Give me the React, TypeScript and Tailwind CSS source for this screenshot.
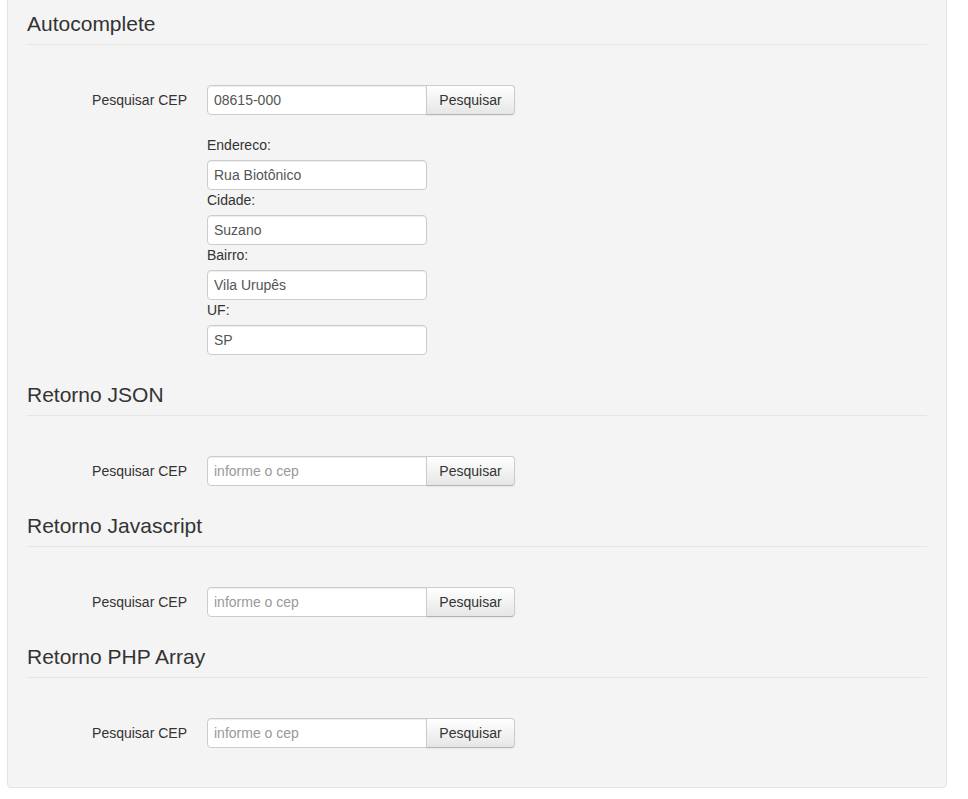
import type { ReactNode } from 'react'

const font = { fontFamily: '"Liberation Sans", Arial, sans-serif' }

function Legend({ children }: { children: ReactNode }) {
  return (
    <div className="mb-5 h-[41px] border-b border-[#e5e5e5] text-[21px] leading-[40px] text-[#333]">
      {children}
    </div>
  )
}

function SearchRow({ value }: { value?: string }) {
  return (
    <div className="mb-5 flex pt-5">
      <label className="w-[160px] pt-[5px] text-right text-[14px] leading-5 text-[#333]">Pesquisar CEP</label>
      <div className="ml-5 flex">
        <input
          type="text"
          defaultValue={value}
          placeholder="informe o cep"
          className="h-[30px] w-[220px] rounded-l-[4px] border border-[#ccc] bg-white px-[6px] text-[14px] leading-5 text-[#555] shadow-[inset_0_1px_1px_rgba(0,0,0,0.075)] outline-none placeholder:text-[#999]"
        />
        <button
          type="button"
          className="-ml-px h-[30px] w-[89px] rounded-r-[4px] border border-[#ccc] border-b-[#b3b3b3] bg-gradient-to-b from-white to-[#e6e6e6] text-[14px] leading-5 text-[#333] shadow-[inset_0_1px_0_rgba(255,255,255,0.2),0_1px_2px_rgba(0,0,0,0.05)]"
        >
          Pesquisar
        </button>
      </div>
    </div>
  )
}

function Field({ label, value }: { label: string; value: string }) {
  return (
    <div>
      <label className="mb-[5px] block text-[14px] leading-5 text-[#333]">{label}</label>
      <input
        type="text"
        defaultValue={value}
        className="block h-[30px] w-[220px] rounded-[4px] border border-[#ccc] bg-white px-[6px] text-[14px] leading-5 text-[#555] shadow-[inset_0_1px_1px_rgba(0,0,0,0.075)] outline-none"
      />
    </div>
  )
}

export default function App() {
  return (
    <div className="min-h-screen bg-white pr-[21px] pl-[7px]" style={font}>
      <div className="-mt-[35px] rounded-[4px] border border-[#e3e3e3] bg-[#f4f4f4] px-[19px] pt-[38px] pb-[19px] shadow-[inset_0_1px_1px_rgba(0,0,0,0.05)]">
        <Legend>Autocomplete</Legend>
        <SearchRow value="08615-000" />
        <div className="mb-5 ml-[180px]">
          <Field label="Endereco:" value="Rua Biotônico" />
          <Field label="Cidade:" value="Suzano" />
          <Field label="Bairro:" value="Vila Urupês" />
          <Field label="UF:" value="SP" />
        </div>

        <Legend>Retorno JSON</Legend>
        <SearchRow />

        <Legend>Retorno Javascript</Legend>
        <SearchRow />

        <Legend>Retorno PHP Array</Legend>
        <SearchRow />
      </div>
    </div>
  )
}
